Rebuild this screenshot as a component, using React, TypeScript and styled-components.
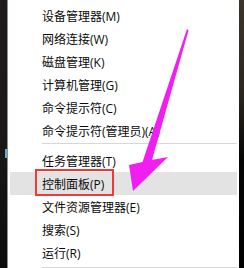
import React from "react";
import styled, { createGlobalStyle } from "styled-components";

const Global = createGlobalStyle`
  html, body { margin: 0; padding: 0; background: #ffffff; }
  body { width: 244px; height: 268px; overflow: hidden; }
`;

const Screen = styled.div`
  position: relative;
  display: flex;
  width: 244px;
  height: 268px;
  overflow: hidden;
`;

const LeftEdge = styled.div`
  position: relative;
  width: 7px;
  background: linear-gradient(#1d1c1a 0%, #1a1918 50%, #0c0c0c 100%);
  border-right: 1px solid #8f8f8f;
`;

const BlueMark = styled.div`
  position: absolute;
  left: 5px;
  top: 149px;
  width: 2px;
  height: 9px;
  background: #64a8ea;
`;

const RightEdge = styled.div`
  width: 5px;
  background: linear-gradient(#3a342b 0%, #2a2620 35%, #050505 60%, #000 100%);
`;

const Menu = styled.div`
  flex: 1;
  display: flex;
  flex-direction: column;
  padding: 4px 2px 0 2px;
  background: #ffffff;
  font-family: "Open Sans", "Noto Sans CJK SC", sans-serif;
  font-size: 12px;
  color: #0a0a0a;
`;

const Item = styled.div<{ $active?: boolean }>`
  position: relative;
  height: 23px;
  display: flex;
  align-items: center;
  padding-left: 32px;
  background: ${(p) => (p.$active ? "#e3e3e3" : "transparent")};
  white-space: nowrap;
`;

const Separator = styled.div<{ $top: number; $bottom: number }>`
  height: 1px;
  margin: ${(p) => p.$top}px 0 ${(p) => p.$bottom}px 32px;
  background: #d7d7d7;
`;

const Highlight = styled.div`
  position: absolute;
  left: 25px;
  top: -3px;
  width: 75px;
  height: 23px;
  border: 2px solid #f03a3a;
`;

const Arrow = styled.svg`
  position: absolute;
  left: 0;
  top: 0;
  pointer-events: none;
`;

const groupA = [
  "设备管理器(M)",
  "网络连接(W)",
  "磁盘管理(K)",
  "计算机管理(G)",
  "命令提示符(C)",
  "命令提示符(管理员)(A)",
];

const groupB = ["文件资源管理器(E)", "搜索(S)", "运行(R)"];

export default function App() {
  return (
    <>
      <Global />
      <Screen>
        <LeftEdge>
          <BlueMark />
        </LeftEdge>
        <Menu>
          {groupA.map((t) => (
            <Item key={t}>{t}</Item>
          ))}
          <Separator $top={1} $bottom={5} />
          <Item>任务管理器(T)</Item>
          <Item $active>
            控制面板(P)
            <Highlight />
          </Item>
          {groupB.map((t) => (
            <Item key={t}>{t}</Item>
          ))}
          <Separator $top={3} $bottom={0} />
        </Menu>
        <RightEdge />
        <Arrow width="244" height="268" viewBox="0 0 244 268">
          <polygon
            points="187,29 188.5,30.5 152,160 168,157 133,191 129,165 142.5,162"
            fill="#f01ef0"
          />
        </Arrow>
      </Screen>
    </>
  );
}
